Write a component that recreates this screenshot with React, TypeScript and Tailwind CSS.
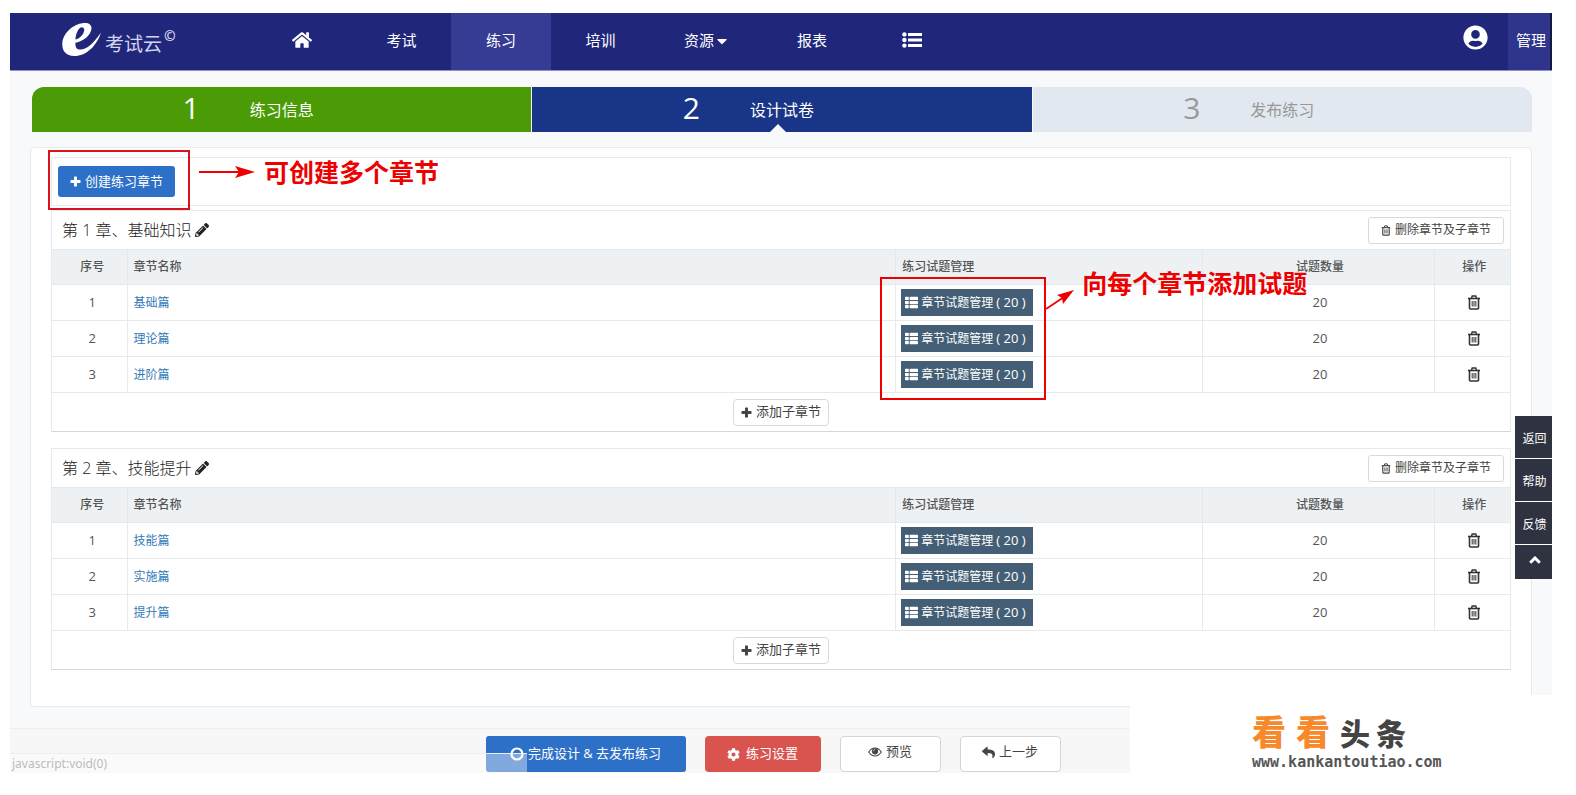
import { FaCaretDown, FaCog, FaHome, FaPencilAlt, FaReply, FaThList, FaUserCircle } from 'react-icons/fa';

interface Lesson {
  id: number;
  name: string;
  count: number;
}

interface Chapter {
  title: string;
  lessons: Lesson[];
}

const chapters: Chapter[] = [
  {
    title: '第 1 章、基础知识',
    lessons: [
      { id: 1, name: '基础篇', count: 20 },
      { id: 2, name: '理论篇', count: 20 },
      { id: 3, name: '进阶篇', count: 20 },
    ],
  },
  {
    title: '第 2 章、技能提升',
    lessons: [
      { id: 1, name: '技能篇', count: 20 },
      { id: 2, name: '实施篇', count: 20 },
      { id: 3, name: '提升篇', count: 20 },
    ],
  },
];

const TrashIcon = ({ className }: { className: string }) => (
  <svg viewBox="0 0 14 15" className={className} fill="none" stroke="currentColor" aria-hidden="true">
    <path d="M1 3.5h12" strokeWidth="1.6" />
    <path d="M4.5 3.2 5.2 1h3.6l.7 2.2" strokeWidth="1.4" />
    <path d="M2.5 3.8v9.2q0 1 1 1h7q1 0 1-1V3.8" strokeWidth="1.6" />
    <path d="M5.2 6v5.5M7 6v5.5M8.8 6v5.5" strokeWidth="1" />
  </svg>
);

const PlusIcon = () => (
  <svg viewBox="0 0 12 12" className="h-[11px] w-[11px]" fill="currentColor" aria-hidden="true">
    <path d="M4.4 1.2q0-.7.7-.7h1.8q.7 0 .7.7v3.2h3.2q.7 0 .7.7v1.8q0 .7-.7.7H7.6v3.2q0 .7-.7.7H5.1q-.7 0-.7-.7V7.6H1.2q-.7 0-.7-.7V5.1q0-.7.7-.7h3.2z" />
  </svg>
);

const ListIcon = () => (
  <svg viewBox="0 0 20 16" className="h-4 w-5" fill="currentColor" aria-hidden="true">
    <circle cx="2.4" cy="2.4" r="2.2" />
    <circle cx="2.4" cy="8" r="2.2" />
    <circle cx="2.4" cy="13.6" r="2.2" />
    <path d="M6 1h14v3H6zM6 6.5h14v3H6zM6 12h14v3H6z" />
  </svg>
);

const EyeIcon = () => (
  <svg viewBox="0 0 14 10" className="h-[10px] w-[14px]" aria-hidden="true">
    <path d="M.7 5Q3.3 1 7 1t6.3 4Q10.7 9 7 9T.7 5Z" fill="none" stroke="currentColor" strokeWidth="1.1" />
    <circle cx="7" cy="4.3" r="3.1" fill="currentColor" />
    <path d="M5.4 4.2Q5.5 2.8 6.9 2.6" fill="none" stroke="#fff" strokeWidth=".7" />
  </svg>
);

const Logo = () => (
  <a href="#" className="flex w-[242px] items-center pl-[52px]" aria-label="考试云">
    <svg viewBox="0 0 116 98" className="mb-1 h-[33px] w-[39px] shrink-0 fill-white" aria-hidden="true">
      <path
        fillRule="evenodd"
        d="M116 28C104 66 74 98 36 98 10 98-1 80 1 58 5 25 40 0 68 0c17 0 23 10 18 24-7 20-29 32-46 35-1 13 4 21 16 20 24-2 43-27 60-51ZM40 49c14-4 24-15 26-27 1-11-10-13-17-3-6 9-9 20-9 30Z"
      />
    </svg>
    <span className="ml-1 pt-1 text-[19px] leading-6 text-[#d3d6ee]">考试云</span>
    <span className="mb-3 ml-0.5 text-sm font-bold leading-4 text-[#d3d6ee]">©</span>
  </a>
);

const Header = () => (
  <header className="flex h-[58px] items-stretch border-b border-[#8d91c4] bg-[#20277b] text-[15px] text-white">
    <Logo />
    <nav className="flex flex-1 items-stretch">
      <a href="#" className="flex w-[100px] items-center justify-center pb-1" aria-label="首页">
        <FaHome className="text-xl" />
      </a>
      <a href="#" className="flex w-[99px] items-center justify-center pb-0.5">考试</a>
      <a href="#" className="flex w-[100px] items-center justify-center bg-[#363c93] pb-0.5" aria-current="page">练习</a>
      <a href="#" className="flex w-[99px] items-center justify-center pb-0.5">培训</a>
      <a href="#" className="flex w-[112px] items-center justify-center pb-0.5 pl-0.5">
        资源
        <FaCaretDown className="text-base" />
      </a>
      <a href="#" className="flex w-[100px] items-center justify-center pb-0.5">报表</a>
      <a href="#" className="flex w-[99px] items-center justify-center pb-1" aria-label="更多">
        <ListIcon />
      </a>
    </nav>
    <button type="button" className="mr-5 flex items-center pb-2" aria-label="账户">
      <FaUserCircle className="text-[25px]" />
    </button>
    <a href="#" className="flex w-11 items-center justify-center border-r-2 border-[#15193f] bg-[#2f358c] pb-0.5 pl-1">
      管理
    </a>
  </header>
);

const Steps = () => (
  <ol className="ml-[22px] mr-5 mt-4 grid h-[45px] grid-cols-3 gap-px text-base">
    <li className="grid grid-cols-[1fr_auto_1fr] items-center rounded-tl-xl bg-[#4a9b06] text-white">
      <span className="pb-1 pr-[50px] text-right text-[30px] leading-10">1</span>
      <span>练习信息</span>
    </li>
    <li
      className="relative grid grid-cols-[1fr_auto_1fr] items-center bg-[#183587] text-white"
      aria-current="step"
    >
      <span className="pb-1 pr-[50px] text-right text-[30px] leading-10">2</span>
      <span>设计试卷</span>
      <svg viewBox="0 0 16 8" className="absolute bottom-0 left-1/2 h-2 w-4 -translate-x-3 fill-[#f7f9fb]" aria-hidden="true">
        <path d="M8 0l8 8H0z" />
      </svg>
    </li>
    <li className="grid grid-cols-[1fr_auto_1fr] items-center rounded-tr-xl bg-[#e2e8ef] text-[#999]">
      <span className="pb-1 pr-[50px] text-right text-[30px] leading-10">3</span>
      <span>发布练习</span>
    </li>
  </ol>
);

// Red call-out pointing at the create button
const CreateNote = () => (
  <div className="pointer-events-none absolute -left-1 -top-2 flex items-start">
    <div className="h-[60px] w-[142px] border-2 border-[#d9121b]" />
    <svg viewBox="0 0 58 14" className="ml-2 mt-[15px] h-[14px] w-[58px]" aria-hidden="true">
      <path d="M1 7h42" stroke="#e00" strokeWidth="1.8" />
      <path d="M57 7 37 1l4 6-4 6z" fill="#e00" />
    </svg>
    <p className="ml-2 mt-2 whitespace-nowrap font-['Liberation_Serif','Noto_Sans_CJK_SC',serif] text-[25px] font-bold leading-8 text-[#e00]">
      可创建多个章节
    </p>
  </div>
);

// Red call-out around the question buttons of the first chapter
const QuestionNote = () => (
  <div className="pointer-events-none absolute -left-4 -top-2 z-10 flex items-start">
    <div className="h-[123px] w-[166px] border-2 border-[#e00]" />
    <svg viewBox="0 0 28 20" className="mt-[13px] h-5 w-7" aria-hidden="true">
      <path d="M0 19 18 7" stroke="#e00" strokeWidth="1.8" />
      <path d="M28 0 11 5l5 3 1 6z" fill="#e00" />
    </svg>
    <p className="-mt-2 ml-2 whitespace-nowrap font-['Liberation_Serif','Noto_Sans_CJK_SC',serif] text-[25px] font-bold leading-8 text-[#e00]">
      向每个章节添加试题
    </p>
  </div>
);

const ChapterSection = ({ chapter, noted }: { chapter: Chapter; noted: boolean }) => (
  <section className="border border-[#e7eaec] border-b-[#d5d8da]">
    <div className="flex h-[38px] items-center justify-between pl-2.5 pr-1.5">
      <h2 className="flex items-center gap-1 text-base font-light text-[#222]">
        {chapter.title}
        <button type="button" aria-label="编辑章节">
          <FaPencilAlt className="text-sm" />
        </button>
      </h2>
      <button
        type="button"
        className="flex h-[27px] items-center gap-1 rounded-[3px] border border-[#d9d9d9] px-3 text-xs text-[#444]"
      >
        <TrashIcon className="h-[11px] w-[10px]" />
        删除章节及子章节
      </button>
    </div>
    <table className="w-full table-fixed border-collapse text-[13px] text-[#555]">
      <thead>
        <tr className="h-[35px] bg-[#edf1f4] text-xs">
          <th className="w-[75px] border-y border-r border-[#e4e9ec] pl-1.5 font-medium">序号</th>
          <th className="border border-[#e4e9ec] pl-1.5 text-left font-medium">章节名称</th>
          <th className="w-[21%] border border-[#e4e9ec] pl-1.5 text-left font-medium">练习试题管理</th>
          <th className="w-[232px] border border-[#e4e9ec] pl-1 font-medium">试题数量</th>
          <th className="w-[76px] border-y border-l border-[#e4e9ec] pl-1 font-medium">操作</th>
        </tr>
      </thead>
      <tbody>
        {chapter.lessons.map((lesson, i) => (
          <tr key={lesson.id} className="h-9">
            <td className="border-y border-r border-[#e7eaec] pl-1.5 text-center">{lesson.id}</td>
            <td className="border border-[#e7eaec] pl-1.5 text-xs">
              <a href="#" className="text-[#337ab7]">{lesson.name}</a>
            </td>
            <td className="relative border border-[#e7eaec] pl-[5px]">
              <button
                type="button"
                className="flex h-[27px] w-[132px] items-center gap-[3px] whitespace-nowrap bg-[#445f75] pl-1 text-xs text-white"
              >
                <FaThList className="text-[13px]" />
                章节试题管理
                <span className="text-[13px]">( {lesson.count} )</span>
              </button>
              {noted && i === 0 && <QuestionNote />}
            </td>
            <td className="border border-[#e7eaec] pl-1 text-center">{lesson.count}</td>
            <td className="border-y border-l border-[#e7eaec] pl-1">
              <button type="button" className="mx-auto block text-[#333]" aria-label="删除">
                <TrashIcon className="h-[15px] w-[14px]" />
              </button>
            </td>
          </tr>
        ))}
      </tbody>
    </table>
    <div className="flex h-[38px] items-center justify-center">
      <button
        type="button"
        className="flex h-[27px] items-center gap-1 rounded border border-[#d9d9d9] px-[7px] text-[13px] text-[#444]"
      >
        <PlusIcon />
        添加子章节
      </button>
    </div>
  </section>
);

const SideBar = () => (
  <aside className="absolute right-0 top-[403px] flex w-[37px] flex-col gap-px bg-white text-xs text-white">
    <a href="#" className="flex h-[42px] items-center justify-center bg-[#2f3240] pl-0.5 pt-1">返回</a>
    <a href="#" className="flex h-[42px] items-center justify-center bg-[#2f3240] pl-0.5 pt-1">帮助</a>
    <a href="#" className="flex h-[42px] items-center justify-center bg-[#2f3240] pl-0.5 pt-1">反馈</a>
    <button
      type="button"
      className="flex h-[34px] items-center justify-center bg-[#2f3240] pb-1 pl-0.5"
      aria-label="返回顶部"
    >
      <svg viewBox="0 0 12 8" className="h-2 w-3" fill="none" stroke="currentColor" strokeWidth="3" aria-hidden="true">
        <path d="M1.2 6.8 6 2l4.8 4.8" />
      </svg>
    </button>
  </aside>
);

const Watermark = () => (
  <div className="absolute bottom-0 right-0 flex h-[78px] w-[422px] flex-col justify-end bg-white pb-[3px] pl-[122px]">
    <div className="flex items-end gap-2.5 font-black">
      <span className="flex gap-2.5 text-[34px] leading-[43px] text-[#f8892b]">
        <span>看</span>
        <span>看</span>
      </span>
      <span className="flex gap-1.5 text-[30px] leading-10 text-[#444]">
        <span>头</span>
        <span>条</span>
      </span>
    </div>
    <p className="font-['DejaVu_Sans_Mono',monospace] text-[15px] font-bold leading-4 text-[#555]">
      www.kankantoutiao.com
    </p>
  </div>
);

const App = () => (
  <div className="min-h-screen bg-white pb-[22px] pl-[10px] pr-6 pt-[13px] font-['Open_Sans','Noto_Sans_CJK_SC',sans-serif]">
    <div className="relative bg-[#f7f9fb]">
      <Header />
      <Steps />
      <main className="mx-5 mt-[15px] rounded-sm border border-[#e7eaec] bg-white px-5 pb-9 pt-[9px]">
        <div className="relative mb-1 flex h-[49px] items-center border border-[#e7eaec] pl-1.5">
          <button
            type="button"
            className="flex h-[31px] items-center gap-1 rounded-[3px] bg-[#2d70c8] px-3 text-[13px] text-white"
          >
            <PlusIcon />
            创建练习章节
          </button>
          <CreateNote />
        </div>
        <div className="flex flex-col gap-4">
          {chapters.map((chapter, i) => (
            <ChapterSection key={chapter.title} chapter={chapter} noted={i === 0} />
          ))}
        </div>
      </main>
      <footer className="relative mt-[21px] flex h-[45px] items-end justify-center gap-[19px] border-t border-[#eceef0] bg-[#f7f7f8] pb-px pr-4 text-[13px] text-[#444]">
        <button type="button" className="flex h-9 w-[200px] items-center justify-center gap-1 rounded-[3px] bg-[#2d70c8] text-white">
          <svg viewBox="0 0 14 14" className="h-[14px] w-[14px]" fill="none" stroke="currentColor" strokeWidth="2.2" aria-hidden="true">
            <circle cx="7" cy="7" r="5.5" />
          </svg>
          完成设计 &amp; 去发布练习
        </button>
        <button type="button" className="flex h-9 w-[116px] items-center justify-center gap-1.5 rounded bg-[#d9534f] text-white">
          <FaCog />
          练习设置
        </button>
        <button type="button" className="flex h-9 w-[101px] items-center justify-center gap-1 rounded border border-[#d5d5d5] bg-white pb-1">
          <EyeIcon />
          预览
        </button>
        <button type="button" className="flex h-9 w-[101px] items-center justify-center gap-1 rounded border border-[#d5d5d5] bg-white pb-1">
          <FaReply />
          上一步
        </button>
        <div className="absolute bottom-0 left-0 h-5 w-[517px] border-t border-[#eee] bg-white/40 pl-0.5 font-['Noto_Sans',sans-serif] text-xs leading-5 text-[#bbb]">
          javascript:void(0)
        </div>
      </footer>
      <SideBar />
      <Watermark />
    </div>
  </div>
);

export default App;
